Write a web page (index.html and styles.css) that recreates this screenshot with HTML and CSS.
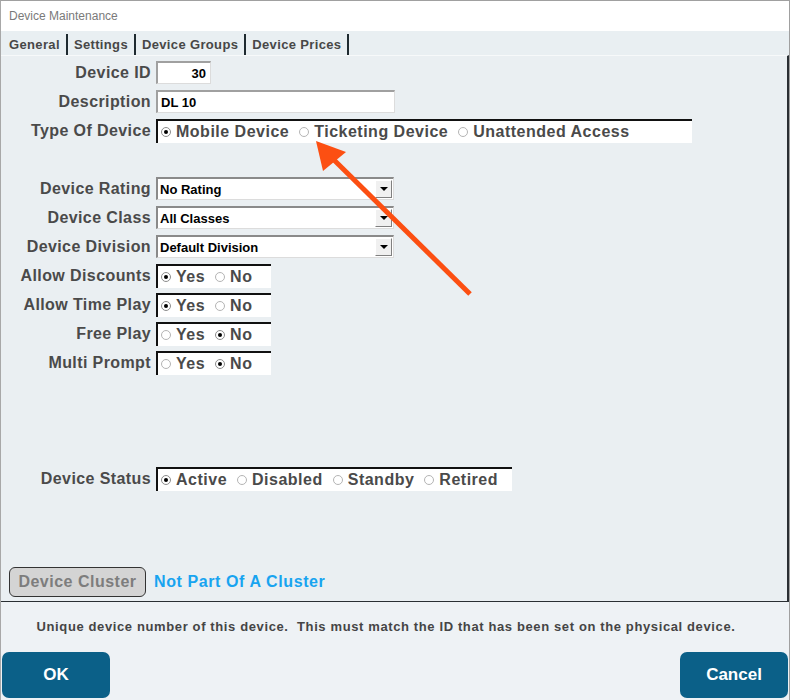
FILE: index.html
```
<!DOCTYPE html>
<html lang="en">
  <head>
    <meta charset="UTF-8" />
    <title>Device Maintenance</title>
    <link rel="stylesheet" href="styles.css">
  </head>
  <body>
    <div class="window">
      <div class="titlebar">Device Maintenance</div>
      <nav class="tabs">
        <ul>
          <li class="on">General</li>
          <li>Settings</li>
          <li>Device Groups</li>
          <li>Device Prices</li>
        </ul>
      </nav>
      <div class="panel">
        <div class="row">
          <label>Device ID</label>
          <div class="input id">30</div>
        </div>
        <div class="row">
          <label>Description</label>
          <div class="input desc">DL 10</div>
        </div>
        <div class="row">
          <label>Type Of Device</label>
          <div class="radios type">
            <span class="opt"><i class="radio checked"></i>Mobile Device</span>
            <span class="opt"><i class="radio"></i>Ticketing Device</span>
            <span class="opt"><i class="radio"></i>Unattended Access</span>
          </div>
        </div>
        <div class="gap1"></div>
        <div class="row">
          <label>Device Rating</label>
          <div class="select"><span>No Rating</span><b class="drop"></b></div>
        </div>
        <div class="row">
          <label>Device Class</label>
          <div class="select"><span>All Classes</span><b class="drop"></b></div>
        </div>
        <div class="row">
          <label>Device Division</label>
          <div class="select"><span>Default Division</span><b class="drop"></b></div>
        </div>
        <div class="row">
          <label>Allow Discounts</label>
          <div class="radios yesno">
            <span class="opt"><i class="radio checked"></i>Yes</span>
            <span class="opt"><i class="radio"></i>No</span>
          </div>
        </div>
        <div class="row">
          <label>Allow Time Play</label>
          <div class="radios yesno">
            <span class="opt"><i class="radio checked"></i>Yes</span>
            <span class="opt"><i class="radio"></i>No</span>
          </div>
        </div>
        <div class="row">
          <label>Free Play</label>
          <div class="radios yesno">
            <span class="opt"><i class="radio"></i>Yes</span>
            <span class="opt"><i class="radio checked"></i>No</span>
          </div>
        </div>
        <div class="row">
          <label>Multi Prompt</label>
          <div class="radios yesno">
            <span class="opt"><i class="radio"></i>Yes</span>
            <span class="opt"><i class="radio checked"></i>No</span>
          </div>
        </div>
        <div class="gap3"></div>
        <div class="row">
          <label>Device Status</label>
          <div class="radios status">
            <span class="opt"><i class="radio checked"></i>Active</span>
            <span class="opt"><i class="radio"></i>Disabled</span>
            <span class="opt"><i class="radio"></i>Standby</span>
            <span class="opt"><i class="radio"></i>Retired</span>
          </div>
        </div>
        <div class="cluster">
          <button class="cluster-btn" disabled>Device Cluster</button>
          <span class="cluster-info">Not Part Of A Cluster</span>
        </div>
      </div>
      <div class="footer">
        <p class="help">Unique device number of this device.&nbsp; This must match the ID that has been set on the physical device.</p>
        <div class="buttons">
          <button class="btn">OK</button>
          <button class="btn">Cancel</button>
        </div>
      </div>
      <!-- annotation arrow over the form -->
      <svg class="arrow" width="790" height="700" viewBox="0 0 790 700">
        <line x1="332" y1="158" x2="470" y2="294" stroke="#fc4f12" stroke-width="5" />
        <polygon points="316,141 346,152 323,171" fill="#fc4f12" />
      </svg>
    </div>
  </body>
</html>
```
FILE: styles.css
```
* {
  margin: 0;
  padding: 0;
  box-sizing: border-box;
}
body {
  font-family: "Liberation Sans", Arial, sans-serif;
  background: #fff;
}
ul,
li {
  list-style: none;
}

.window {
  position: relative;
  width: 790px;
  height: 700px;
  border-top: 1px solid #a0a0a0;
  border-left: 1px solid #a8a8a8;
  border-right: 1px solid #a0a0a0;
  display: flex;
  flex-direction: column;
  overflow: hidden;
}
.titlebar {
  height: 30px;
  padding: 8px 0 0 8px;
  font-size: 12px;
  color: #7a7a7a;
  background: #fff;
}

/* tabs */
.tabs {
  height: 24px;
  background: #e9eff2;
}
.tabs ul {
  display: flex;
  padding: 3px 0 0 2px;
  height: 24px;
}
.tabs li {
  padding: 3px 6px 0 6px;
  font-size: 13px;
  font-weight: bold;
  letter-spacing: 0.35px;
  color: #474747;
  border-right: 2px solid #1f2a30;
}

/* form area */
.panel {
  flex: 1;
  display: flex;
  flex-direction: column;
  padding-top: 2px;
  background: #eaeff2;
  border-top: 1px solid #f7f9fa;
  border-right: 2px solid #2a2f33;
  border-bottom: 1px solid #2a2f33;
}
.row {
  display: flex;
  align-items: center;
  height: 29px;
}
.row label {
  width: 150px;
  margin-right: 5px;
  text-align: right;
  font-size: 16px;
  font-weight: bold;
  letter-spacing: 0.4px;
  color: #4a4a4a;
  white-space: nowrap;
}
.gap1 {
  height: 29px;
}
.gap3 {
  height: 87px;
}

.input {
  height: 23px;
  padding: 3px 4px 0 3px;
  font-size: 13px;
  font-weight: bold;
  color: #000;
  background: #fff;
  border-top: 2px solid #a0a0a0;
  border-left: 2px solid #a0a0a0;
  border-right: 1px solid #dcdcdc;
  border-bottom: 1px solid #dcdcdc;
}
.input.id {
  width: 55px;
  text-align: right;
}
.input.desc {
  width: 239px;
}

.select {
  position: relative;
  display: flex;
  width: 238px;
  height: 23px;
  background: #fff;
  border-top: 2px solid #8a8a8a;
  border-left: 2px solid #8a8a8a;
  border-right: 1px solid #dcdcdc;
  border-bottom: 1px solid #dcdcdc;
}
.select span {
  flex: 1;
  padding: 3px 0 0 2px;
  font-size: 13px;
  font-weight: bold;
  color: #000;
}
.drop {
  width: 17px;
  margin: 1px 1px 1px 0;
  background: #f0f0f0;
  border-top: 1px solid #fff;
  border-left: 1px solid #fff;
  border-right: 1px solid #808080;
  border-bottom: 1px solid #808080;
  display: flex;
  align-items: center;
  justify-content: center;
}
.drop::after {
  content: "";
  border-left: 4px solid transparent;
  border-right: 4px solid transparent;
  border-top: 4px solid #000;
}

.radios {
  display: flex;
  align-items: center;
  gap: 10px;
  height: 24px;
  padding-left: 3px;
  background: #fff;
  border-top: 2px solid #111;
  border-left: 2px solid #111;
}
.radios.type {
  width: 536px;
}
.radios.yesno {
  width: 115px;
}
.radios.status {
  width: 356px;
}
.opt {
  display: flex;
  align-items: center;
  font-size: 16px;
  font-weight: bold;
  letter-spacing: 0.5px;
  color: #4a4a4a;
  white-space: nowrap;
}
.radio {
  position: relative;
  width: 10px;
  height: 10px;
  margin-right: 5px;
  border: 1px solid #b4b4b4;
  border-radius: 50%;
  background: #fff;
}
.radio.checked {
  border-color: #8c8c8c;
}
.radio.checked::after {
  content: "";
  position: absolute;
  left: 2px;
  top: 2px;
  width: 4px;
  height: 4px;
  border-radius: 50%;
  background: #000;
}

.cluster {
  margin-top: auto;
  margin-bottom: 4px;
  display: flex;
  align-items: center;
  gap: 8px;
  padding-left: 8px;
}
.cluster-btn {
  width: 137px;
  height: 30px;
  font-family: "Liberation Sans", Arial, sans-serif;
  font-size: 16px;
  font-weight: bold;
  letter-spacing: 0.5px;
  color: #7d7d7d;
  background: #d4d4d4;
  border: 1px solid #333;
  border-radius: 6px;
}
.cluster-info {
  font-size: 16px;
  font-weight: bold;
  letter-spacing: 0.6px;
  color: #18a4f0;
}

/* footer */
.footer {
  height: 98px;
  background: #eef2f5;
  padding: 17px 1px 2px 1px;
  display: flex;
  flex-direction: column;
}
.help {
  padding-right: 18px;
  text-align: center;
  font-size: 13px;
  font-weight: bold;
  letter-spacing: 0.62px;
  color: #454545;
  line-height: 16px;
}
.buttons {
  margin-top: auto;
  display: flex;
  justify-content: space-between;
}
.btn {
  width: 108px;
  height: 46px;
  font-family: "Liberation Sans", Arial, sans-serif;
  font-size: 17px;
  font-weight: bold;
  color: #fff;
  background: #0b6088;
  border: none;
  border-radius: 7px;
}

.arrow {
  position: absolute;
  left: -1px;
  top: -1px;
  pointer-events: none;
}
```
